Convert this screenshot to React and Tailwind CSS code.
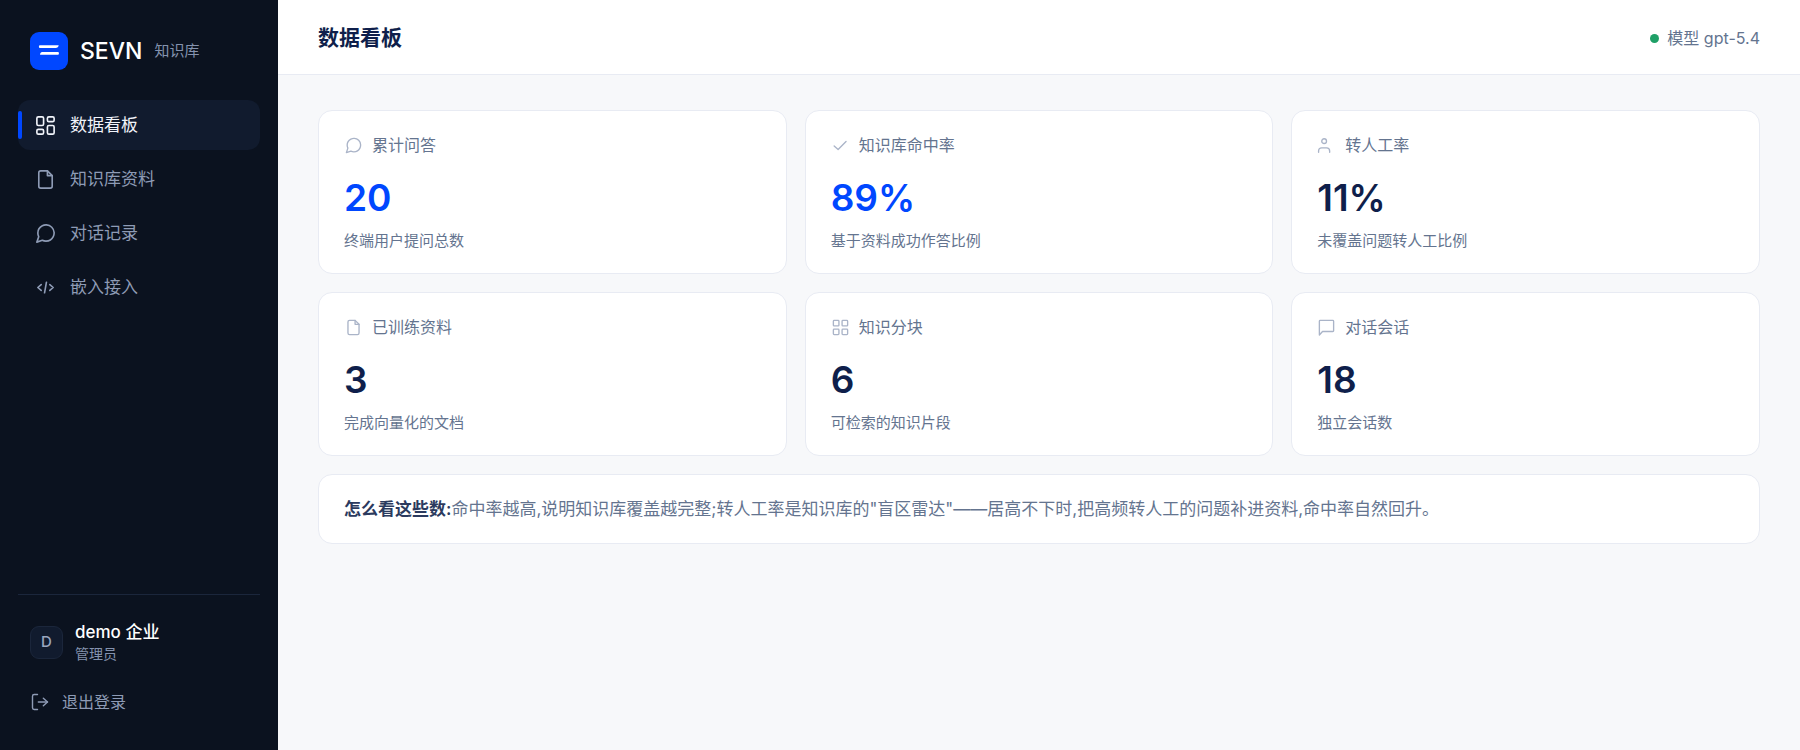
import React, { useState } from "react";

const iconPaths = {
  dashboard: (
    <>
      <rect x="3" y="3" width="7" height="9" rx="1.5" />
      <rect x="14" y="3" width="7" height="5" rx="1.5" />
      <rect x="14" y="12" width="7" height="9" rx="1.5" />
      <rect x="3" y="16" width="7" height="5" rx="1.5" />
    </>
  ),
  file: (
    <>
      <path d="M14 3H7a2 2 0 0 0-2 2v14a2 2 0 0 0 2 2h10a2 2 0 0 0 2-2V8z" />
      <path d="M14 3v5h5" />
    </>
  ),
  chat: (
    <path d="M21 11.5a8.4 8.4 0 0 1-.9 3.8 8.5 8.5 0 0 1-7.6 4.7 8.4 8.4 0 0 1-3.8-.9L3 21l1.9-5.7a8.4 8.4 0 0 1-.9-3.8 8.5 8.5 0 0 1 4.7-7.6 8.4 8.4 0 0 1 3.8-.9h.5a8.5 8.5 0 0 1 8 8z" />
  ),
  code: (
    <>
      <path d="M7.5 9 4 12l3.5 3" />
      <path d="M16.5 9l3.5 3-3.5 3" />
      <path d="M13 6.5l-2 11" />
    </>
  ),
  check: <path d="M4 12.5l5 4.5L19 7" />,
  user: (
    <>
      <circle cx="9" cy="6.5" r="3" />
      <path d="M2 20.5V19a4 4 0 0 1 4-4h6a4 4 0 0 1 4 4v1.5" />
    </>
  ),
  grid: (
    <>
      <rect x="3" y="3" width="7" height="7" rx="1" />
      <rect x="14" y="3" width="7" height="7" rx="1" />
      <rect x="3" y="14" width="7" height="7" rx="1" />
      <rect x="14" y="14" width="7" height="7" rx="1" />
    </>
  ),
  message: <path d="M21 16a1 1 0 0 1-1 1H7l-4 4.5V4a1 1 0 0 1 1-1h16a1 1 0 0 1 1 1z" />,
  logout: (
    <>
      <path d="M9 21H5a2 2 0 0 1-2-2V5a2 2 0 0 1 2-2h4" />
      <path d="M16 7.5l5 4.5-5 4.5" />
      <path d="M21 12H10" />
    </>
  ),
};

const Icon = ({ name, className }) => (
  <svg
    viewBox="0 0 24 24"
    fill="none"
    stroke="currentColor"
    strokeWidth="1.7"
    strokeLinecap="round"
    strokeLinejoin="round"
    aria-hidden="true"
    className={className}
  >
    {iconPaths[name]}
  </svg>
);

const navItems = [
  { id: "dashboard", label: "数据看板", icon: "dashboard" },
  { id: "docs", label: "知识库资料", icon: "file" },
  { id: "chats", label: "对话记录", icon: "chat" },
  { id: "embed", label: "嵌入接入", icon: "code" },
];

const stats = [
  { label: "累计问答", value: "20", hint: "终端用户提问总数", icon: "chat", accent: true },
  { label: "知识库命中率", value: "89%", hint: "基于资料成功作答比例", icon: "check", accent: true },
  { label: "转人工率", value: "11%", hint: "未覆盖问题转人工比例", icon: "user" },
  { label: "已训练资料", value: "3", hint: "完成向量化的文档", icon: "file" },
  { label: "知识分块", value: "6", hint: "可检索的知识片段", icon: "grid" },
  { label: "对话会话", value: "18", hint: "独立会话数", icon: "message" },
];

const StatCard = ({ label, value, hint, icon, accent }) => (
  <div className="rounded-[14px] border border-[#e8ebf3] bg-white px-[25px] pt-[23px] pb-[22px]">
    <div className="flex items-center gap-[9px] text-[16px] leading-[23px] text-[#64748f]">
      <Icon name={icon} className="size-[19px] shrink-0 text-[#aab4c8]" />
      <span>{label}</span>
    </div>
    <div
      className={`mt-[21px] text-[37px] leading-[40px] font-semibold ${
        accent ? "text-[#0047ff]" : "text-[#0f1f4b]"
      }`}
    >
      {value}
    </div>
    <div className="mt-3 text-[15px] leading-[21px] text-[#64748f]">{hint}</div>
  </div>
);

const Sidebar = ({ active, onSelect }) => (
  <aside className="flex w-[278px] shrink-0 flex-col bg-[#0b121f] px-[18px] pt-8 pb-9">
    <div className="flex items-center gap-3 px-3">
      <svg viewBox="0 0 38 38" aria-hidden="true" className="size-[38px] shrink-0">
        <rect width="38" height="38" rx="9" fill="#0047ff" />
        <path d="M9.5 13.3h19.2c-.3 1.8-1.3 2.8-3 2.8H9.9c-1.2 0-1.3-2-.4-2.8z" fill="#fff" />
        <path d="M12.2 20h16c1 0 1 2.7 0 2.7H10c.2-1.7.9-2.7 2.2-2.7z" fill="#fff" />
      </svg>
      <span className="text-[23px] leading-[28px] font-medium text-white">SEVN</span>
      <span className="text-[15px] leading-[24px] text-[#8492ae]">知识库</span>
    </div>

    <nav className="mt-[30px] flex flex-col gap-1">
      {navItems.map((item) => (
        <a
          key={item.id}
          href={`#${item.id}`}
          onClick={() => onSelect(item.id)}
          className={`relative flex h-[50px] items-center gap-[13px] rounded-xl px-4 text-[17px] leading-[24px] ${
            active === item.id ? "bg-[#111b2e] text-[#f1f4fa]" : "text-[#8e9bb5]"
          }`}
        >
          {active === item.id && (
            <span className="absolute top-[11px] left-0 h-7 w-1 rounded-xs bg-[#0047ff]" />
          )}
          <Icon name={item.icon} className="size-[23px] shrink-0" />
          {item.label}
        </a>
      ))}
    </nav>

    {/* Account */}
    <div className="mt-auto border-t border-[#1b263b] px-3 pt-[25px]">
      <div className="flex items-center gap-3">
        <div className="flex size-[33px] shrink-0 items-center justify-center rounded-[9px] border border-[#1b263b] bg-[#111b2e] text-[15px] font-medium text-[#9aa6be]">
          D
        </div>
        <div>
          <div className="text-[17px] leading-[24px] font-medium text-white">demo 企业</div>
          <div className="text-[14px] leading-[20px] text-[#8492ae]">管理员</div>
        </div>
      </div>
      <button
        type="button"
        className="mt-[26px] flex cursor-pointer items-center gap-3 text-[16px] leading-[24px] text-[#8e9bb5]"
      >
        <Icon name="logout" className="size-5 shrink-0" />
        退出登录
      </button>
    </div>
  </aside>
);

const App = () => {
  const [active, setActive] = useState("dashboard");

  return (
    <div className="flex min-h-screen bg-[#f7f8fa] font-[Inter,'Noto_Sans_CJK_SC',sans-serif]">
      <Sidebar active={active} onSelect={setActive} />

      <div className="min-w-0 flex-1">
        <header className="flex h-[75px] items-center justify-between border-b border-[#e8ebf3] bg-white px-10 pt-0.5">
          <h1 className="text-[21px] leading-[28px] font-semibold text-[#0f1f4b]">数据看板</h1>
          <div className="flex items-center gap-2 text-[16px] leading-[24px] text-[#64748f]">
            <span className="size-[9px] rounded-full bg-[#1fa067]" />
            <span>模型 gpt-5.4</span>
          </div>
        </header>

        <main className="flex flex-col gap-[18px] px-10 py-[35px]">
          <div className="grid grid-cols-3 gap-[18px]">
            {stats.map((stat) => (
              <StatCard key={stat.label} {...stat} />
            ))}
          </div>

          <div className="rounded-[14px] border border-[#e8ebf3] bg-white px-[25px] py-5 text-[17px] leading-[28px] text-[#64748f]">
            <strong className="font-semibold text-[#2b3a5e]">怎么看这些数:</strong>
            命中率越高,说明知识库覆盖越完整;转人工率是知识库的"盲区雷达"——居高不下时,把高频转人工的问题补进资料,命中率自然回升。
          </div>
        </main>
      </div>
    </div>
  );
};

export default App;
